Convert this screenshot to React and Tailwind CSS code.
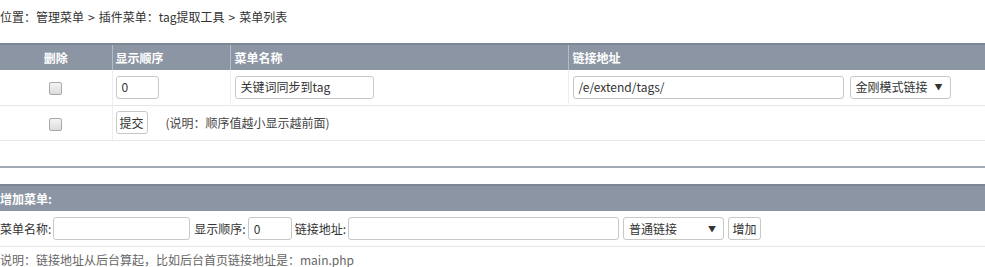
export default function App() {
  const font = { fontFamily: '"Microsoft YaHei", "Noto Sans CJK SC", "Noto Sans", sans-serif' };
  const inputCls = "h-[23px] border border-[#c8c8c8] rounded-[3px] bg-white px-[5px] text-[12px] text-[#333] outline-none";
  return (
    <div className="w-[985px] h-[267px] bg-white text-[12px] text-[#333] overflow-hidden" style={font}>
      <div className="h-[43px] flex items-center pb-[11px] pt-[1px] text-[#333] text-[12px]">
        <span>位置：管理菜单</span>
        <span className="mx-[4px]">&gt;</span>
        <span>插件菜单：tag提取工具</span>
        <span className="mx-[4px]">&gt;</span>
        <span>菜单列表</span>
      </div>
      <table className="w-full border-collapse border-t-2 border-[#7c8795]">
        <thead>
          <tr className="bg-[#8b95a3] text-white font-bold h-[26px] text-[12px]">
            <th className="w-[112px] text-center border-r border-[#b5bcc6] font-bold">删除</th>
            <th className="w-[118px] text-left pl-[3px] border-r border-[#b5bcc6] font-bold">显示顺序</th>
            <th className="w-[338px] text-left pl-[4px] border-r border-[#b5bcc6] font-bold">菜单名称</th>
            <th className="text-left pl-[4px] font-bold">链接地址</th>
          </tr>
        </thead>
        <tbody>
          <tr className="h-[35px] border-b border-[#e6e6e6]">
            <td className="text-center border-r border-[#eeeeee]">
              <span className="inline-block w-[13px] h-[13px] border border-[#a8a8a8] rounded-[2px] bg-gradient-to-b from-[#f4f4f4] to-[#dcdcdc] align-middle"></span>
            </td>
            <td className="pl-[3px] border-r border-[#eeeeee]">
              <div className={inputCls + " w-[43px] flex items-center"}>0</div>
            </td>
            <td className="pl-[4px] border-r border-[#eeeeee]">
              <div className={inputCls + " w-[139px] flex items-center"}>关键词同步到tag</div>
            </td>
            <td className="pl-[4px]">
              <div className="flex items-center gap-[6px]">
                <div className={inputCls + " w-[271px] flex items-center"}>/e/extend/tags/</div>
                <div className={inputCls + " w-[101px] flex items-center justify-between pr-[7px]"}>
                  <span>金刚模式链接</span>
                  <span className="text-[8px]">▼</span>
                </div>
              </div>
            </td>
          </tr>
          <tr className="h-[35px] border-b border-[#e6e6e6]">
            <td className="text-center border-r border-[#eeeeee]">
              <span className="inline-block w-[13px] h-[13px] border border-[#a8a8a8] rounded-[2px] bg-gradient-to-b from-[#f4f4f4] to-[#dcdcdc] align-middle"></span>
            </td>
            <td colSpan={3} className="pl-[3px]">
              <div className="flex items-center">
                <div className="h-[23px] w-[32px] border border-[#c8c8c8] rounded-[3px] bg-white flex items-center justify-center text-[12px]">提交</div>
                <span className="ml-[18px] text-[#444]">(说明：顺序值越小显示越前面)</span>
              </div>
            </td>
          </tr>
          <tr className="h-[27px] border-b-2 border-[#a2a9b3]">
            <td colSpan={4}></td>
          </tr>
        </tbody>
      </table>
      <div className="h-[16px]"></div>
      <div className="border-t-2 border-[#7c8795] bg-[#8b95a3] h-[27px] flex items-center text-white font-bold">增加菜单:</div>
      <div className="h-[36px] flex items-center border-b border-[#e6e6e6]">
        <span>菜单名称:</span>
        <div className={inputCls + " w-[137px] ml-[2px]"}></div>
        <span className="ml-[4px]">显示顺序:</span>
        <div className={inputCls + " w-[44px] ml-[2px] flex items-center"}>0</div>
        <span className="ml-[3px]">链接地址:</span>
        <div className={inputCls + " w-[271px] ml-[2px]"}></div>
        <div className={inputCls + " w-[101px] ml-[4px] flex items-center justify-between pr-[7px]"}>
          <span>普通链接</span>
          <span className="text-[8px]">▼</span>
        </div>
        <div className="h-[23px] w-[33px] ml-[4px] border border-[#c8c8c8] rounded-[3px] bg-white flex items-center justify-center">增加</div>
      </div>
      <div className="h-[26px] flex items-center text-[#666]">说明：链接地址从后台算起，比如后台首页链接地址是：main.php</div>
    </div>
  );
}
